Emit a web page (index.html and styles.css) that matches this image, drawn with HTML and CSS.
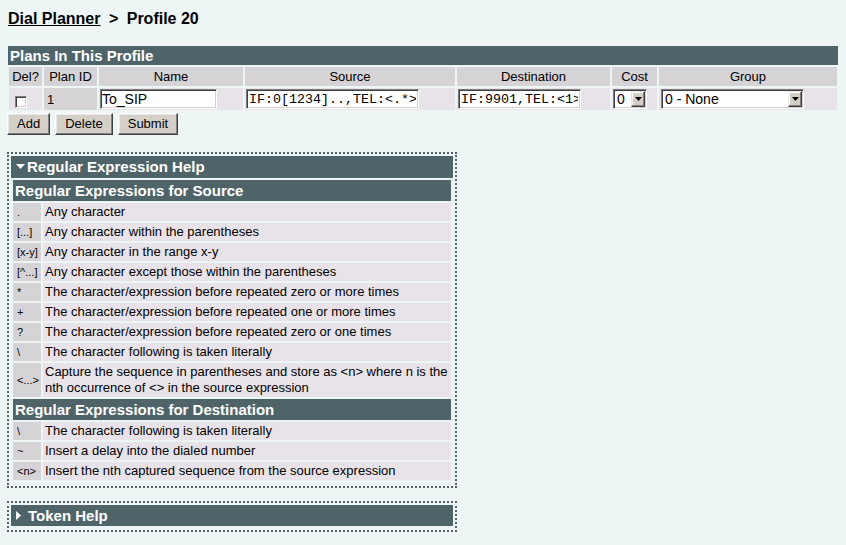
FILE: index.html
```html
<!DOCTYPE html>
<html>
<head>
<meta charset="utf-8">
<title>Dial Planner - Profile 20</title>
<link rel="stylesheet" href="styles.css">
</head>
<body>
<h1 class="crumbs"><a href="#">Dial Planner</a><span class="sep"> &gt; </span>Profile 20</h1>

<form class="plans">
  <div class="bar">Plans In This Profile</div>
  <table class="plan-table">
    <colgroup>
      <col class="c-del"><col class="c-id"><col class="c-name"><col class="c-src"><col class="c-dst"><col class="c-cost"><col class="c-group">
    </colgroup>
    <tr class="hdr">
      <th>Del?</th><th>Plan ID</th><th>Name</th><th>Source</th><th>Destination</th><th>Cost</th><th>Group</th>
    </tr>
    <tr class="row">
      <td><input type="checkbox" class="chk"></td>
      <td class="pid">1</td>
      <td><input type="text" class="txt name" value="To_SIP"></td>
      <td><input type="text" class="txt mono src" value="IF:0[1234]..,TEL:<.*>"></td>
      <td><input type="text" class="txt mono dst" value="IF:9901,TEL:<1>"></td>
      <td><span class="sel cost"><select><option>0</option></select><span class="arrow"><svg width="7" height="4" viewBox="0 0 7 4"><path d="M0 0H7L3.5 4Z" fill="#000"/></svg></span></span></td>
      <td><span class="sel group"><select><option>0 - None</option></select><span class="arrow"><svg width="7" height="4" viewBox="0 0 7 4"><path d="M0 0H7L3.5 4Z" fill="#000"/></svg></span></span></td>
    </tr>
  </table>
  <div class="buttons">
    <button type="button" class="btn">Add</button>
    <button type="button" class="btn">Delete</button>
    <button type="button" class="btn">Submit</button>
  </div>
</form>

<div class="helpbox">
  <div class="bar big"><svg class="tri-down" width="9" height="5" viewBox="0 0 9 5"><path d="M0 0H9L4.5 5Z" fill="#fff"/></svg>Regular Expression Help</div>
  <table class="regex">
    <colgroup><col class="c-sym"><col></colgroup>
    <tr><th colspan="2" class="sub">Regular Expressions for Source</th></tr>
    <tr><td class="sym">.</td><td>Any character</td></tr>
    <tr><td class="sym">[...]</td><td>Any character within the parentheses</td></tr>
    <tr><td class="sym">[x-y]</td><td>Any character in the range x-y</td></tr>
    <tr><td class="sym">[^...]</td><td>Any character except those within the parentheses</td></tr>
    <tr><td class="sym">*</td><td>The character/expression before repeated zero or more times</td></tr>
    <tr><td class="sym">+</td><td>The character/expression before repeated one or more times</td></tr>
    <tr><td class="sym">?</td><td>The character/expression before repeated zero or one times</td></tr>
    <tr><td class="sym">\</td><td>The character following is taken literally</td></tr>
    <tr><td class="sym">&lt;...&gt;</td><td>Capture the sequence in parentheses and store as &lt;n&gt; where n is the<br>nth occurrence of &lt;&gt; in the source expression</td></tr>
    <tr><th colspan="2" class="sub">Regular Expressions for Destination</th></tr>
    <tr><td class="sym">\</td><td>The character following is taken literally</td></tr>
    <tr><td class="sym">~</td><td>Insert a delay into the dialed number</td></tr>
    <tr><td class="sym">&lt;n&gt;</td><td>Insert the nth captured sequence from the source expression</td></tr>
  </table>
</div>

<div class="helpbox token">
  <div class="bar big"><svg class="tri-right" width="5" height="9" viewBox="0 0 5 9"><path d="M0 0L5 4.5L0 9Z" fill="#fff"/></svg>Token Help</div>
</div>
</body>
</html>
```

FILE: styles.css
```css
* { box-sizing: border-box; }
html, body { margin: 0; }
body {
  background: #eef6f5;
  font-family: "Liberation Sans", Arial, sans-serif;
  font-size: 13px;
  color: #000;
  padding: 9px 8px 0;
}

.crumbs {
  font-size: 16px;
  font-weight: bold;
  line-height: 20px;
  margin: 0 0 17px;
}
.crumbs a { color: #000; text-decoration: underline; }
.crumbs .sep { margin: 0 4px; }

.bar {
  background: #4f6469;
  color: #fff;
  font-weight: bold;
  font-size: 15px;
  line-height: 19px;
  height: 19px;
  padding: 0 2px;
  white-space: nowrap;
}
.bar.big { height: 22px; line-height: 22px; padding-left: 5px; }
.token .bar.big { height: 21px; line-height: 21px; }

.plans { width: 830px; margin: 0; }
.plan-table {
  width: 832px;
  margin-left: -1px;
  border-spacing: 2px;
  table-layout: fixed;
}
.c-del { width: 33px; }
.c-id { width: 53px; }
.c-name { width: 144px; }
.c-src { width: 210px; }
.c-dst { width: 153px; }
.c-cost { width: 45px; }
.c-group { width: 178px; }

.hdr th {
  background: #d6d3d6;
  font-weight: normal;
  line-height: 19px;
  height: 19px;
  padding: 0;
  text-align: center;
}
.row td {
  background: #e8e3e8;
  height: 22px;
  padding: 1px;
  vertical-align: middle;
  white-space: nowrap;
}
.row td.pid { background: #d6d3d6; padding-left: 3px; }

.chk {
  -webkit-appearance: none;
  appearance: none;
  display: block;
  width: 12px;
  height: 12px;
  margin: 5px 0 0 5px;
  background: #fff;
  border: 1px solid;
  border-color: #808080 #fff #fff #808080;
  box-shadow: inset 1px 1px #404040, inset -1px -1px #d4d0c8;
}

.txt {
  display: block;
  height: 20px;
  margin: 0;
  padding: 0 1px;
  background: #fff;
  border: 1px solid;
  border-color: #808080 #fff #fff #808080;
  box-shadow: inset 1px 1px #404040, inset -1px -1px #d4d0c8;
  font-family: "Liberation Sans", Arial, sans-serif;
  font-size: 14px;
  color: #000;
  outline: none;
}
.txt.mono {
  font-family: "Liberation Mono", "Courier New", monospace;
  font-size: 13.33px;
  padding: 0 2px;
}
.txt.name { width: 117px; }
.txt.src { width: 173px; }
.txt.dst { width: 123px; }

.sel {
  position: relative;
  display: block;
  height: 20px;
}
.sel.cost { width: 34px; }
.sel.group { width: 143px; margin-left: 1px; }
.sel select {
  -webkit-appearance: none;
  appearance: none;
  display: block;
  width: 100%;
  height: 20px;
  margin: 0;
  padding: 0 0 0 3px;
  background: #fff;
  border: 1px solid;
  border-color: #808080 #fff #fff #808080;
  box-shadow: inset 1px 1px #404040, inset -1px -1px #d4d0c8;
  border-radius: 0;
  font-family: "Liberation Sans", Arial, sans-serif;
  font-size: 14px;
  color: #000;
  outline: none;
}
.sel .arrow {
  position: absolute;
  top: 2px;
  right: 2px;
  width: 14px;
  height: 16px;
  background: #d4d0c8;
  border: 1px solid;
  border-color: #e8e8e8 #404040 #404040 #e8e8e8;
  box-shadow: inset -1px -1px #808080, inset 1px 1px #fff;
  display: flex;
  align-items: center;
  justify-content: center;
}
.sel .arrow svg { display: block; }

.buttons {
  display: flex;
  gap: 5px;
  margin: 1px 0 0 -1px;
}
.btn {
  height: 22px;
  margin: 0;
  padding: 0 9px;
  background: #d4d0c8;
  border: 1px solid;
  border-color: #fff #404040 #404040 #fff;
  box-shadow: inset -1px -1px #808080, inset 1px 1px #e8e8e8;
  border-radius: 0;
  font-family: "Liberation Sans", Arial, sans-serif;
  font-size: 13px;
  line-height: 18px;
  color: #000;
}

.helpbox {
  width: 450px;
  margin: 17px 0 0 -1px;
  border: 2px dotted #4f6469;
  padding: 2px 2px 4px;
}
.helpbox.token { margin-top: 13px; }

.tri-down { display: inline-block; vertical-align: middle; margin: -3px 2px 0 0; }
.tri-right { display: inline-block; vertical-align: middle; margin: -3px 7px 0 0; }

.regex {
  width: 442px;
  border-spacing: 2px;
  table-layout: fixed;
}
.c-sym { width: 28px; }
.regex th.sub {
  background: #4f6469;
  color: #fff;
  font-size: 15px;
  font-weight: bold;
  text-align: left;
  height: 21px;
  line-height: 21px;
  padding: 0 2px;
  white-space: nowrap;
}
.regex td {
  background: #e8e3e8;
  line-height: 16px;
  padding: 1px 2px;
  vertical-align: middle;
  white-space: nowrap;
}
.regex td.sym {
  background: #d6d3d6;
  font-size: 11px;
  padding-left: 4px;
  padding-right: 0;
}
```
